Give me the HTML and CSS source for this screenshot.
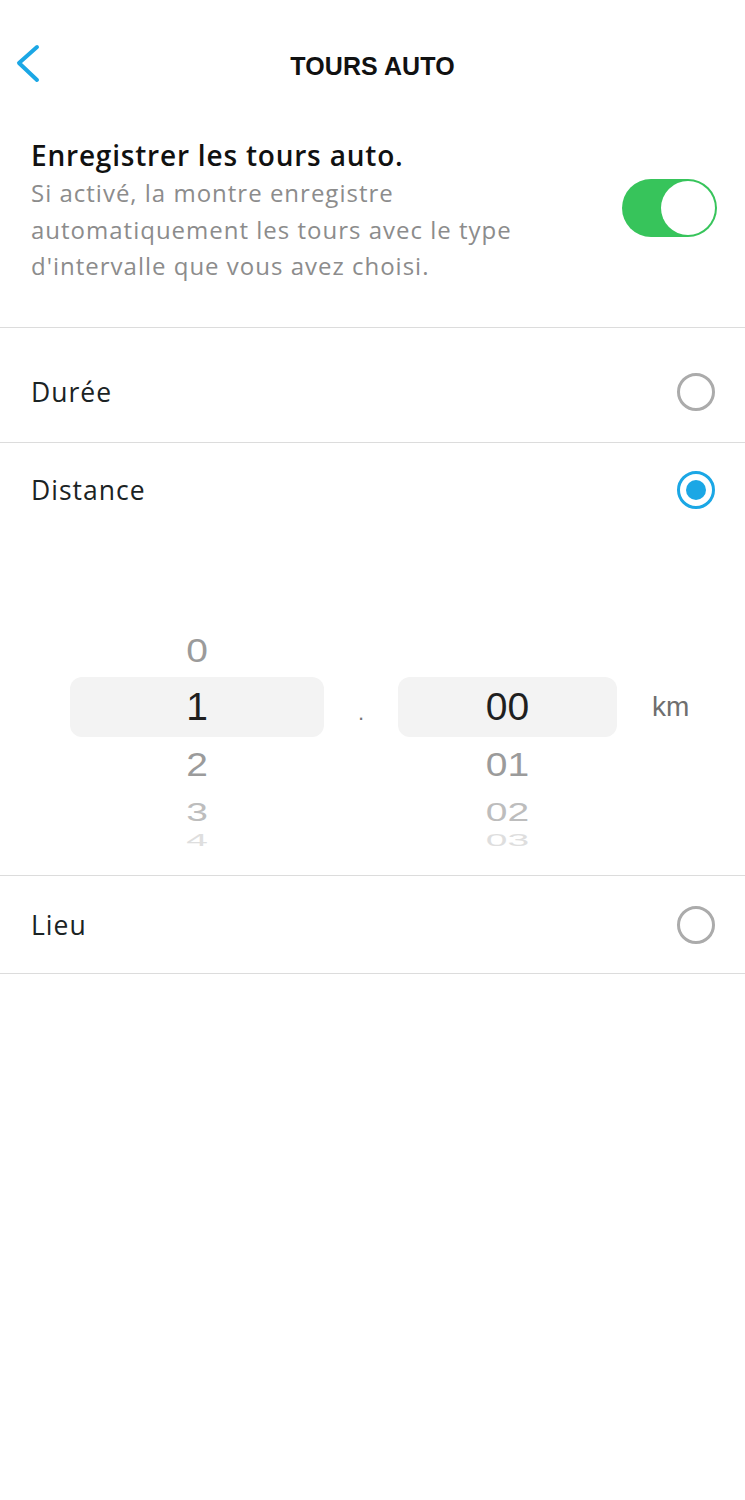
FILE: index.html
```html
<!DOCTYPE html>
<html lang="fr">
<head>
    <meta charset="UTF-8">
    <meta name="viewport" content="width=device-width, initial-scale=1.0">
    <title>Tours auto</title>
    <link rel="stylesheet" href="styles.css">
</head>
<body>
    <div class="screen">
        <header class="nav">
            <a class="back" href="#" aria-label="Retour">
                <svg width="40" height="50" viewBox="0 0 40 50">
                    <polyline points="29,9 11,25 29,42" fill="none" stroke="#1ba7e5" stroke-width="4" stroke-linecap="round" stroke-linejoin="round"/>
                </svg>
            </a>
            <h1>TOURS AUTO</h1>
        </header>

        <section class="intro">
            <div class="intro-text">
                <h2>Enregistrer les tours auto.</h2>
                <p>Si activé, la montre enregistre automatiquement les tours avec le type d'intervalle que vous avez choisi.</p>
            </div>
            <div class="toggle on"><span class="knob"></span></div>
        </section>

        <ul class="options">
            <li class="option option-first">
                <span class="label">Durée</span>
                <span class="radio"></span>
            </li>
            <li class="option option-open">
                <div class="option-head">
                    <span class="label">Distance</span>
                    <span class="radio checked"></span>
                </div>
                <div class="picker">
                    <div class="wheel wheel-left">
                        <div class="item near"><span>0</span></div>
                        <div class="item selected"><span>1</span></div>
                        <div class="item near"><span>2</span></div>
                        <div class="item far"><span>3</span></div>
                        <div class="item farther"><span>4</span></div>
                    </div>
                    <div class="sep"><span>.</span></div>
                    <div class="wheel wheel-right">
                        <div class="item selected"><span>00</span></div>
                        <div class="item near"><span>01</span></div>
                        <div class="item far"><span>02</span></div>
                        <div class="item farther"><span>03</span></div>
                    </div>
                    <div class="unit">km</div>
                </div>
            </li>
            <li class="option option-last">
                <span class="label">Lieu</span>
                <span class="radio"></span>
            </li>
        </ul>
    </div>
</body>
</html>
```

FILE: styles.css
```css
body {
    margin: 0;
    padding: 0;
    background-color: #fff;
    color: #111;
    font-family: "Liberation Sans", Arial, sans-serif;
}
.screen {
    width: 745px;
    min-height: 1500px;
    background: #fff;
}

/* barre du haut */
.nav {
    display: flex;
    align-items: center;
    height: 100px;
    padding-top: 32px;
    box-sizing: border-box;
    position: relative;
}
.back {
    display: flex;
    margin-left: 8px;
    margin-top: -6px;
}
.nav h1 {
    position: absolute;
    left: 0;
    right: 0;
    top: 32px;
    bottom: 0;
    margin: 0;
    display: flex;
    align-items: center;
    justify-content: center;
    font-size: 25px;
    font-weight: bold;
    letter-spacing: 0.1px;
    color: #111;
    pointer-events: none;
}

/* bloc intro + interrupteur */
.intro {
    display: flex;
    align-items: center;
    justify-content: space-between;
    padding: 37px 28px 42px 31px;
    border-bottom: 1px solid #dcdcdc;
    font-family: "Open Sans", "Liberation Sans", sans-serif;
}
.intro h2 {
    margin: 0;
    font-size: 28px;
    line-height: 36px;
    font-weight: 600;
    letter-spacing: 0.8px;
    color: #111;
}
.intro p {
    margin: 2px 0 0;
    width: 540px;
    font-size: 24px;
    line-height: 36.5px;
    color: #8c8c8c;
    letter-spacing: 1px;
}
.toggle {
    width: 95px;
    height: 58px;
    border-radius: 29px;
    background: #d0d0d0;
    display: flex;
    align-items: center;
    padding: 2px;
    box-sizing: border-box;
    margin-bottom: 6px;
    flex-shrink: 0;
}
.toggle.on {
    background: #37c45b;
    justify-content: flex-end;
}
.knob {
    width: 54px;
    height: 54px;
    border-radius: 50%;
    background: #fff;
}

/* liste des options */
.options {
    list-style: none;
    margin: 0;
    padding: 0;
}
.option {
    border-bottom: 1px solid #dcdcdc;
}
.option, .option-head {
    display: flex;
    align-items: center;
    justify-content: space-between;
    padding-left: 31px;
    padding-right: 30px;
}
.option-first {
    padding-top: 45px;
    padding-bottom: 31px;
}
.option-open {
    display: block;
    padding: 0;
}
.option-head {
    padding-top: 28px;
}
.option-last {
    padding-top: 30px;
    padding-bottom: 29px;
}
.label {
    font-family: "Open Sans", "Liberation Sans", sans-serif;
    font-size: 26.5px;
    letter-spacing: 1px;
    color: #1b2324;
    line-height: 38px;
}
.radio {
    width: 38px;
    height: 38px;
    border-radius: 50%;
    border: 3px solid #ababab;
    box-sizing: border-box;
    display: flex;
    align-items: center;
    justify-content: center;
}
.radio.checked {
    border-color: #1ba7e5;
}
.radio.checked::after {
    content: "";
    width: 20px;
    height: 20px;
    border-radius: 50%;
    background: #1ba7e5;
}

/* sélecteur distance */
.picker {
    display: flex;
    align-items: flex-start;
    padding-left: 70px;
    margin-top: 56px;
    margin-bottom: 26px;
    height: 284px;
    font-size: 39px;
}
.wheel {
    display: flex;
    flex-direction: column;
    height: 284px;
    overflow: hidden;
}
.wheel-left {
    width: 254px;
    padding-top: 60px;
    box-sizing: border-box;
}
.wheel-right {
    width: 219px;
    padding-top: 112px;
    box-sizing: border-box;
}
.item {
    display: flex;
    align-items: center;
    justify-content: center;
    flex-shrink: 0;
    height: 56px;
    color: #9b9b9b;
}
.item span {
    display: block;
    line-height: 1;
}
.item.selected {
    height: 60px;
    background: #f3f3f3;
    border-radius: 12px;
    color: #1f1f1f;
}
.item.near span {
    transform: scaleY(0.85);
}
.wheel-left .item.near:first-child {
    height: 52px;
}
.item.far {
    height: 38px;
    color: #bdbdbd;
}
.item.far span {
    transform: scaleY(0.68);
}
.item.farther {
    height: 20px;
    color: #dedede;
}
.item.farther span {
    transform: scaleY(0.4);
}
.sep {
    width: 74px;
    height: 60px;
    margin-top: 112px;
    display: flex;
    align-items: center;
    justify-content: center;
    font-size: 22px;
    color: #777;
}
.sep span {
    margin-top: 12px;
}
.unit {
    height: 60px;
    margin-top: 112px;
    padding-left: 35px;
    display: flex;
    align-items: center;
    font-size: 28px;
    color: #6f6f6f;
}
```
